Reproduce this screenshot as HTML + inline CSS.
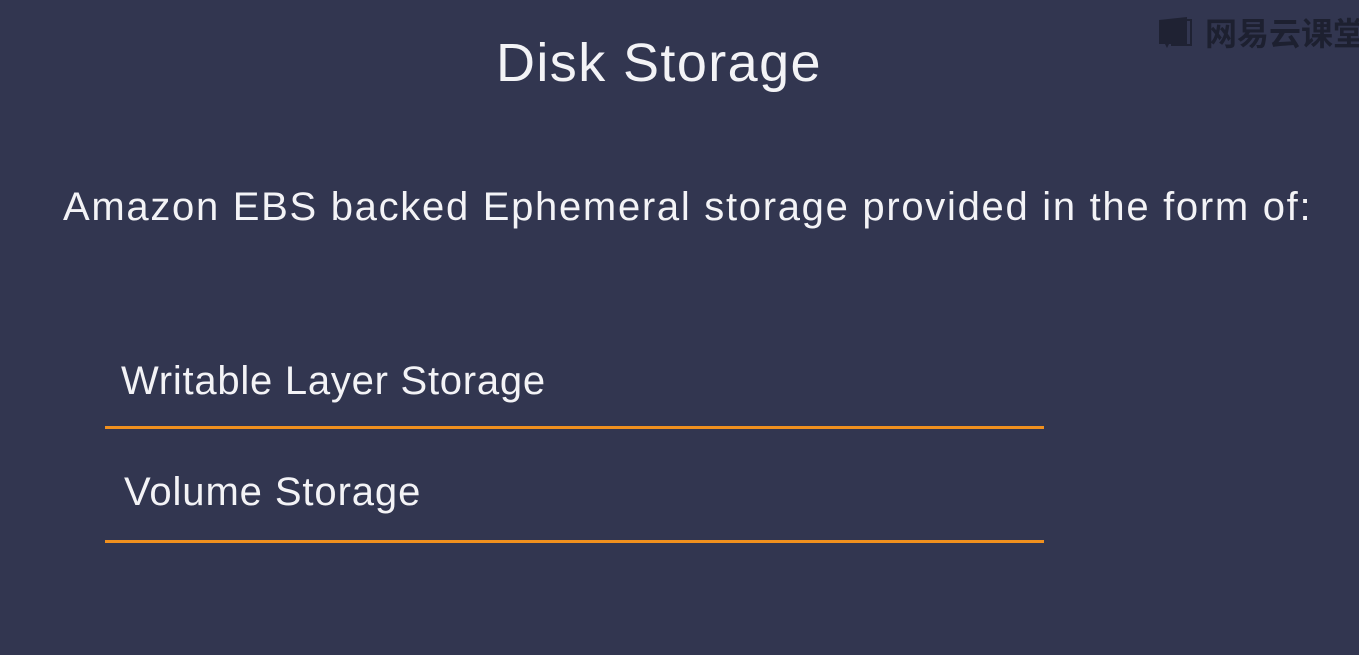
<!DOCTYPE html>
<html><head><meta charset="utf-8"><style>
html,body{margin:0;padding:0}
body{width:1359px;height:655px;background:#323650;position:relative;overflow:hidden;font-family:"Liberation Sans","Noto Sans CJK SC",sans-serif;color:#f3f3f6}
.t{position:absolute;white-space:nowrap;line-height:1}
.line{position:absolute;left:105px;width:939px;height:3px;background:#f0901e}
</style></head><body>
<div class="t" style="left:496px;top:36px;font-size:54px;letter-spacing:1.4px">Disk Storage</div>
<div class="t" style="left:63px;top:187px;font-size:40px;letter-spacing:1.7px">Amazon EBS backed Ephemeral storage provided in the form of:</div>
<div class="t" style="left:121px;top:361px;font-size:40px;letter-spacing:0.75px">Writable Layer Storage</div>
<div class="line" style="top:426px"></div>
<div class="t" style="left:124px;top:472px;font-size:40px;letter-spacing:0.9px">Volume Storage</div>
<div class="line" style="top:540px"></div>
<svg style="position:absolute;left:1157px;top:14px" width="38" height="36" viewBox="0 0 38 36">
<path d="M2 6 L30 3 L30 30 L12 30 L10 34 L8 30 L2 30 Z" fill="#1f2233"/>
<path d="M30 6 L34 6 L34 31 L14 31" fill="none" stroke="#1f2233" stroke-width="2"/>
</svg>
<div class="t" style="left:1205px;top:16px;font-size:32px;color:#1d2030;font-weight:bold;font-family:'Noto Sans CJK SC',sans-serif">网易云课堂</div>
</body></html>
